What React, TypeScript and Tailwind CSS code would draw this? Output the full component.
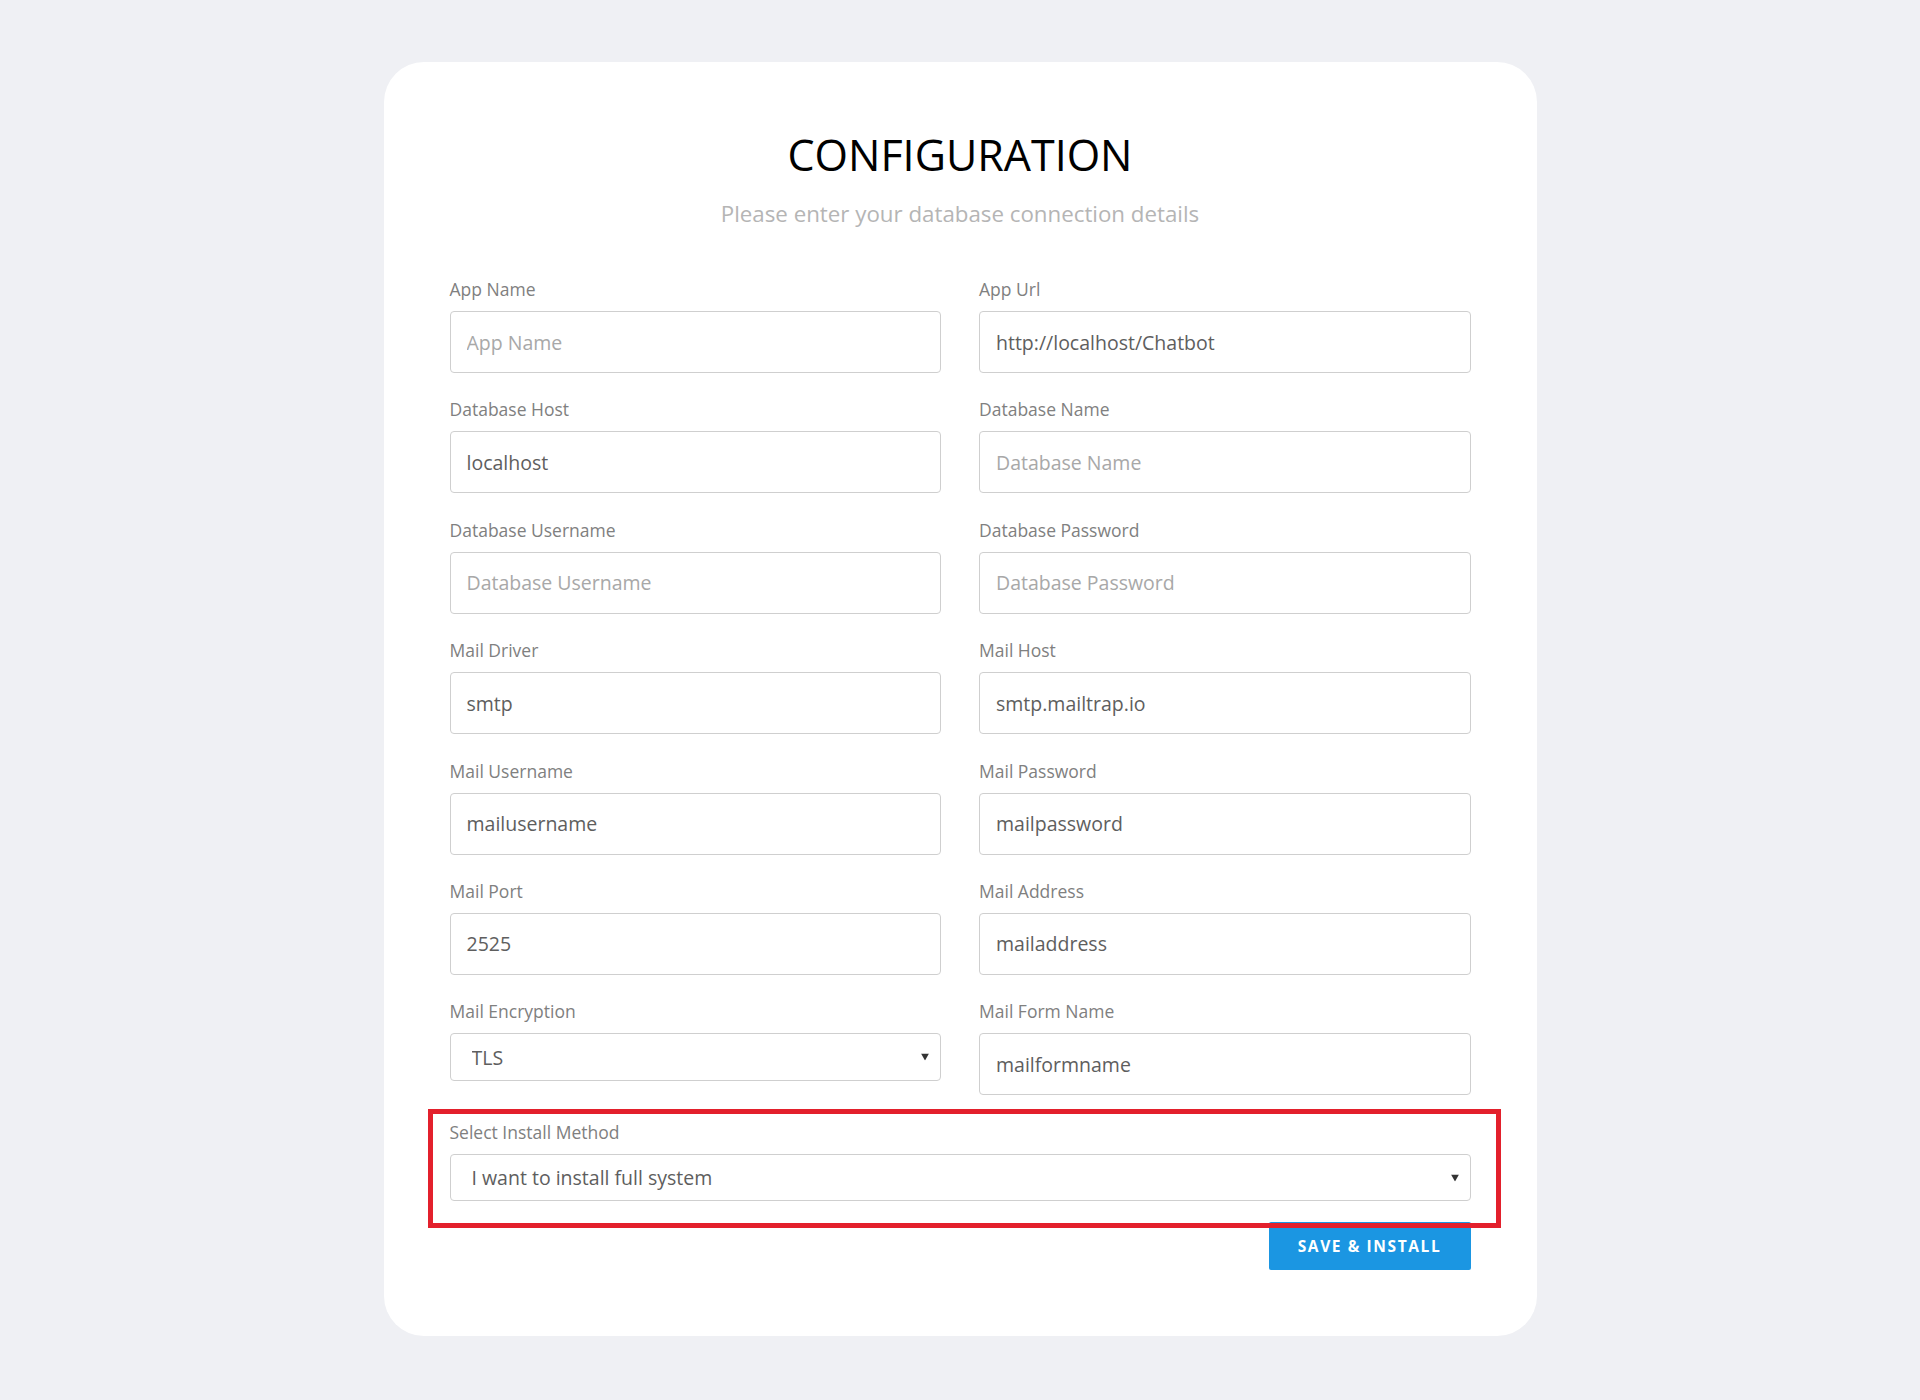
import React from "react";

const fields = [
  { label: "App Name", value: "", placeholder: "App Name" },
  { label: "App Url", value: "http://localhost/Chatbot", placeholder: "App Url" },
  { label: "Database Host", value: "localhost", placeholder: "Database Host" },
  { label: "Database Name", value: "", placeholder: "Database Name" },
  { label: "Database Username", value: "", placeholder: "Database Username" },
  { label: "Database Password", value: "", placeholder: "Database Password" },
  { label: "Mail Driver", value: "smtp", placeholder: "Mail Driver" },
  { label: "Mail Host", value: "smtp.mailtrap.io", placeholder: "Mail Host" },
  { label: "Mail Username", value: "mailusername", placeholder: "Mail Username" },
  { label: "Mail Password", value: "mailpassword", placeholder: "Mail Password" },
  { label: "Mail Port", value: "2525", placeholder: "Mail Port" },
  { label: "Mail Address", value: "mailaddress", placeholder: "Mail Address" },
];

function Label({ children }: { children: React.ReactNode }) {
  return <label className="block text-[17.5px] leading-6 text-[#808080]">{children}</label>;
}

function Arrow() {
  return (
    <svg className="pointer-events-none absolute right-[12px] top-1/2 -translate-y-1/2" width="8" height="7" viewBox="0 0 8 7">
      <path d="M0 0 L8 0 L4 7 Z" fill="#333" />
    </svg>
  );
}

function SelectBox({ value, options, h }: { value: string; options: string[]; h: string }) {
  return (
    <div className="relative mt-[10px]">
      <select
        defaultValue={value}
        className={`block w-full appearance-none rounded-[4px] border border-[#cfcfcf] bg-white pl-[21px] pr-8 text-[19.5px] text-[#5e5e5e] outline-none ${h}`}
      >
        {options.map((o) => (
          <option key={o}>{o}</option>
        ))}
      </select>
      <Arrow />
    </div>
  );
}

const inputCls =
  "mt-[10px] block h-[62px] w-full rounded-[4px] border border-[#cfcfcf] bg-white px-[16px] text-[19.5px] text-[#5e5e5e] outline-none placeholder:text-[#a8a8a8]";

export default function App() {
  return (
    <div className="min-h-[1400px] bg-[#eff0f4] pt-[62px] pb-[64px]" style={{ fontFamily: '"Open Sans", "Liberation Sans", sans-serif' }}>
      <div className="mx-auto w-[1153px] rounded-[40px] bg-white px-[66px] pt-[69px] pb-[66px]">
        <h1 className="text-center text-[43px] font-medium leading-[48px] text-black">CONFIGURATION</h1>
        <p className="mt-5 text-center text-[22.3px] leading-[30px] text-[#b5b5b5]">Please enter your database connection details</p>

        <div className="mt-[48px] grid grid-cols-2 gap-x-[38px] gap-y-[24.4px]">
          {fields.map((f) => (
            <div key={f.label}>
              <Label>{f.label}</Label>
              <input defaultValue={f.value} placeholder={f.placeholder} className={inputCls} />
            </div>
          ))}
          <div>
            <Label>Mail Encryption</Label>
            <SelectBox value="TLS" options={["TLS", "SSL"]} h="h-[48px]" />
          </div>
          <div>
            <Label>Mail Form Name</Label>
            <input defaultValue="mailformname" placeholder="Mail Form Name" className={inputCls} />
          </div>
        </div>

        <div className="relative mt-[25px]">
          <Label>Select Install Method</Label>
          <SelectBox value="I want to install full system" options={["I want to install full system", "I want to install only the update"]} h="h-[47px]" />
          <div className="pointer-events-none absolute -top-[11px] -left-[22px] -right-[30px] -bottom-[27px] z-10 border-[5px] border-[#e3202c]" />
        </div>

        <div className="mt-[21px] flex justify-end">
          <button className="h-[48px] w-[202px] rounded-[2px] bg-[#1b96e2] text-[15.5px] font-bold tracking-[1.6px] text-white">
            SAVE &amp; INSTALL
          </button>
        </div>
      </div>
    </div>
  );
}
